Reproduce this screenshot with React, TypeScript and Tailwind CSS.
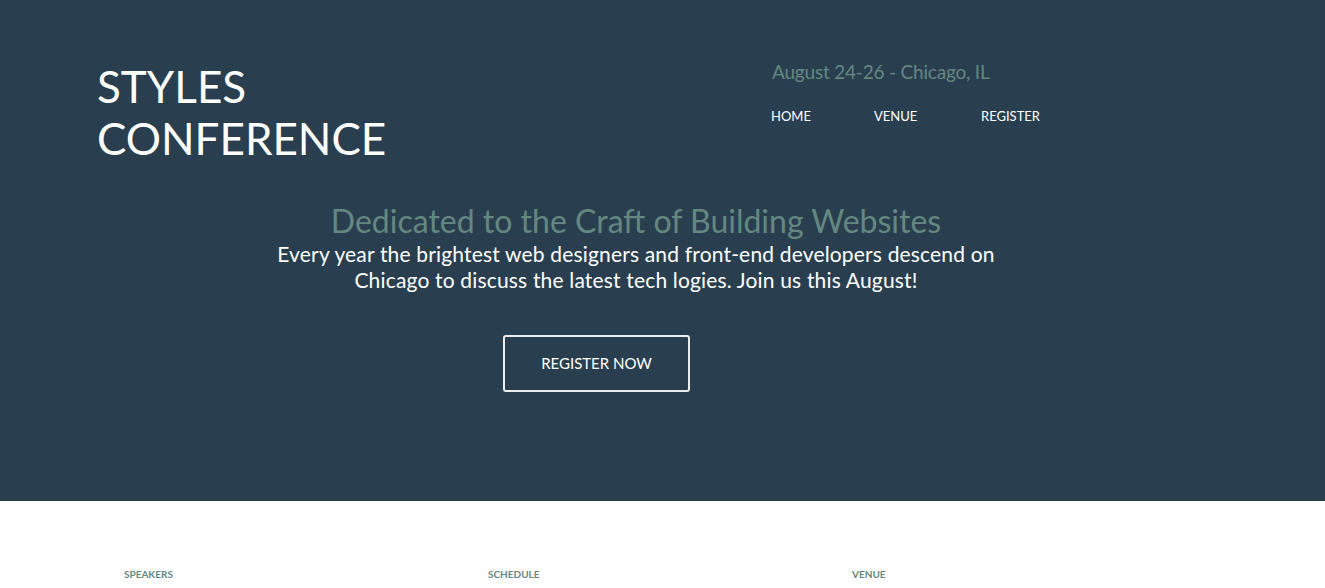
export default function App() {
  const sections = [
    {
      title: "Speakers",
      text: "Twenty-four world-class speakers will share their knowledge, experience and ideas on design and front-end development.",
    },
    {
      title: "Schedule",
      text: "Three days of talks and workshops covering everything from typography and layout to performance and accessibility.",
    },
    {
      title: "Venue",
      text: "The conference takes place at the Chicago Theatre and the Hotel Allegro, right in the heart of the Loop.",
    },
  ];

  return (
    <div className="min-h-[1210px] bg-white font-['Lato','Open_Sans',sans-serif]">
      {/* Header */}
      <header className="h-[501px] bg-[#293f50] pt-[60px] text-white">
        <div className="ml-[97px] w-[1078px]">
          <div className="flex">
            <h1 className="w-[674px] text-[44px] leading-[52px] font-normal uppercase">
              Styles
              <br />
              Conference
            </h1>
            <div>
              <p className="ml-px text-[19px] leading-[24px] tracking-[-0.2px] text-[#648880]">August 24-26 - Chicago, IL</p>
              <nav className="mt-[24px] flex text-[13px] leading-[16px] uppercase">
                <a className="w-[103px]">Home</a>
                <a className="w-[107px]">Venue</a>
                <a>Register</a>
              </nav>
            </div>
          </div>

          {/* Hero */}
          <div className="mt-[38px] text-center">
            <h2 className="text-[32px] leading-[38px] text-[#648880]">Dedicated to the Craft of Building Websites</h2>
            <p className="mx-auto mt-px w-[740px] text-[21px] leading-[26px] tracking-[0.17px]">
              Every year the brightest web designers and front-end developers descend on Chicago to discuss the latest tech logies. Join us this August!
            </p>
          </div>
          <a className="ml-[406px] mt-[42px] flex h-[57px] w-[187px] items-center justify-center rounded-[3px] border-2 border-[#ececec] text-[15px] uppercase">
            Register Now
          </a>
        </div>
      </header>

      {/* Sections */}
      <section className="ml-[124px] grid grid-cols-[364px_364px_364px] pt-[66px]">
        {sections.map((s) => (
          <div key={s.title} className="pr-[40px]">
            <h5 className="text-[10px] font-bold uppercase text-[#648880]">{s.title}</h5>
            <p className="mt-[18px] text-[14px] leading-[22px] text-[#7c8a93]">{s.text}</p>
          </div>
        ))}
      </section>

      <footer className="mt-[420px] border-t border-[#dfe2e5] py-[24px]">
        <p className="ml-[124px] text-[12px] text-[#888888]">© Styles Conference</p>
      </footer>
    </div>
  );
}
